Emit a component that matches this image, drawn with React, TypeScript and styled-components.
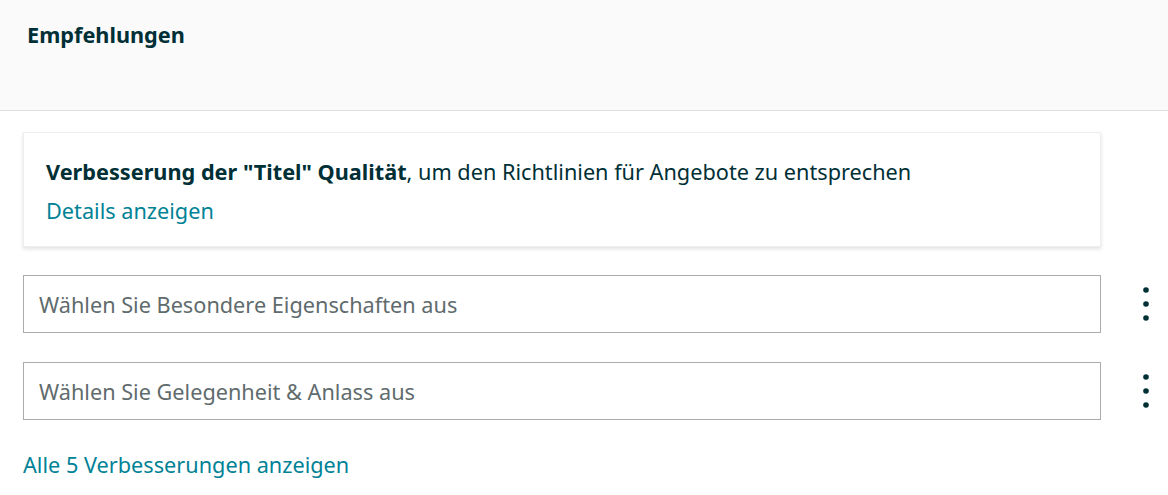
import React from 'react';
import styled, { createGlobalStyle } from 'styled-components';

const GlobalStyle = createGlobalStyle`
  html, body {
    margin: 0;
    padding: 0;
    background: #ffffff;
  }
  body {
    font-family: "Noto Sans", "Liberation Sans", Arial, sans-serif;
    color: #002f36;
  }
`;

const Page = styled.div`
  width: 1168px;
  height: 495px;
  overflow: hidden;
  background: #ffffff;
`;

const Header = styled.div`
  height: 111px;
  box-sizing: border-box;
  background: #fafafa;
  border-bottom: 1px solid #dddddd;
  padding: 20px 27px 0;
`;

const Title = styled.h2`
  margin: 0;
  font-size: 21.7px;
  font-weight: 700;
  line-height: 30px;
  color: #002f36;
`;

const Body = styled.div`
  display: flex;
  flex-direction: column;
  padding: 21px 0 0 23px;
`;

const Card = styled.div`
  width: 1078px;
  height: 115px;
  box-sizing: border-box;
  background: #ffffff;
  border: 1px solid #eeeeee;
  box-shadow: 0 2px 4px rgba(0, 0, 0, 0.12);
  padding: 24px 22px 0;
  margin-bottom: 28px;
`;

const CardText = styled.div`
  font-size: 21.7px;
  line-height: 30px;
  color: #002f36;

  strong {
    font-weight: 700;
  }
`;

const Link = styled.a<{ $top?: number }>`
  display: block;
  margin-top: ${p => p.$top ?? 0}px;
  font-size: 21.7px;
  line-height: 30px;
  color: #008296;
  text-decoration: none;
  cursor: pointer;
`;

const FieldRow = styled.div`
  display: flex;
  align-items: center;
  margin-bottom: 29px;
`;

const Field = styled.div`
  width: 1078px;
  height: 58px;
  box-sizing: border-box;
  border: 1px solid #a9acac;
  display: flex;
  align-items: center;
  padding: 0 15px;
  font-size: 21.7px;
  color: #5f6b6d;
  background: #ffffff;
`;

const MenuButton = styled.button`
  margin-left: 35px;
  width: 20px;
  height: 40px;
  padding: 0;
  border: none;
  background: transparent;
  display: flex;
  align-items: center;
  justify-content: center;
  cursor: pointer;
`;

const Dots = () => (
  <svg width="8" height="36" viewBox="0 0 8 36">
    <circle cx="4" cy="4" r="2.8" fill="#002f36" />
    <circle cx="4" cy="18" r="2.8" fill="#002f36" />
    <circle cx="4" cy="32" r="2.8" fill="#002f36" />
  </svg>
);

const fields = [
  'Wählen Sie Besondere Eigenschaften aus',
  'Wählen Sie Gelegenheit & Anlass aus',
];

const App: React.FC = () => (
  <>
    <GlobalStyle />
    <Page>
      <Header>
        <Title>Empfehlungen</Title>
      </Header>
      <Body>
        <Card>
          <CardText>
            <strong>Verbesserung der "Titel" Qualität</strong>, um den Richtlinien für Angebote zu entsprechen
          </CardText>
          <Link $top={9}>Details anzeigen</Link>
        </Card>
        {fields.map(label => (
          <FieldRow key={label}>
            <Field>{label}</Field>
            <MenuButton aria-label="Mehr">
              <Dots />
            </MenuButton>
          </FieldRow>
        ))}
        <Link $top={1}>Alle 5 Verbesserungen anzeigen</Link>
      </Body>
    </Page>
  </>
);

export default App;
